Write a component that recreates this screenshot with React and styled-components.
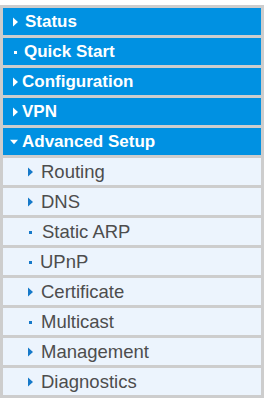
import React from 'react';
import styled, { createGlobalStyle } from 'styled-components';

const GlobalStyle = createGlobalStyle`
  body {
    margin: 0;
    background: #fff;
    font-family: "Liberation Sans", Arial, sans-serif;
  }
`;

const Menu = styled.nav`
  margin-top: 5px;
  width: 258px;
  padding: 3px;
  background: #cdcdcd;
  display: flex;
  flex-direction: column;
  gap: 3px;
`;

const Row = styled.div`
  height: 27px;
  display: flex;
  align-items: center;
  box-sizing: border-box;
  background: ${p => (p.$sub ? '#ecf4fd' : '#0091e2')};
  color: ${p => (p.$sub ? '#4d4d4d' : '#fff')};
  font-weight: ${p => (p.$sub ? 'normal' : 'bold')};
  font-size: ${p => (p.$sub ? '18.5px' : '17px')};
  padding-left: ${p => (p.$sub ? '25px' : '10px')};
  padding-top: 1px;
  white-space: nowrap;
`;

const Marker = styled.span`
  width: 5px;
  margin-right: ${p => p.$gap}px;
  display: flex;
  justify-content: center;
  align-items: center;
  flex-shrink: 0;
`;

function Icon({ kind, color }) {
  if (kind === 'right') {
    return (
      <svg width="5" height="10" viewBox="0 0 5 10">
        <path d="M0 0.5 L5 5 L0 9.5 Z" fill={color} />
      </svg>
    );
  }
  if (kind === 'down') {
    return (
      <svg width="9" height="6" viewBox="0 0 9 6" style={{ marginLeft: -3 }}>
        <path d="M0 0.5 L9 0.5 L4.5 5.5 Z" fill={color} />
      </svg>
    );
  }
  return (
    <svg width="3" height="3" viewBox="0 0 3 3">
      <rect width="3" height="3" fill={color} />
    </svg>
  );
}

const top = [
  { label: 'Status', kind: 'right', gap: 7 },
  { label: 'Quick Start', kind: 'dot', gap: 6 },
  { label: 'Configuration', kind: 'right', gap: 4 },
  { label: 'VPN', kind: 'right', gap: 4 },
  { label: 'Advanced Setup', kind: 'down', gap: 4 },
];

const sub = [
  { label: 'Routing', kind: 'right', gap: 8 },
  { label: 'DNS', kind: 'right', gap: 8 },
  { label: 'Static ARP', kind: 'dot', gap: 9 },
  { label: 'UPnP', kind: 'dot', gap: 7 },
  { label: 'Certificate', kind: 'right', gap: 8 },
  { label: 'Multicast', kind: 'dot', gap: 8 },
  { label: 'Management', kind: 'right', gap: 8 },
  { label: 'Diagnostics', kind: 'right', gap: 8 },
];

export default function App() {
  return (
    <>
      <GlobalStyle />
      <Menu>
        {top.map(item => (
          <Row key={item.label}>
            <Marker $gap={item.gap}><Icon kind={item.kind} color="#fff" /></Marker>
            {item.label}
          </Row>
        ))}
        {sub.map(item => (
          <Row key={item.label} $sub>
            <Marker $gap={item.gap}><Icon kind={item.kind} color="#1679c9" /></Marker>
            {item.label}
          </Row>
        ))}
      </Menu>
    </>
  );
}
